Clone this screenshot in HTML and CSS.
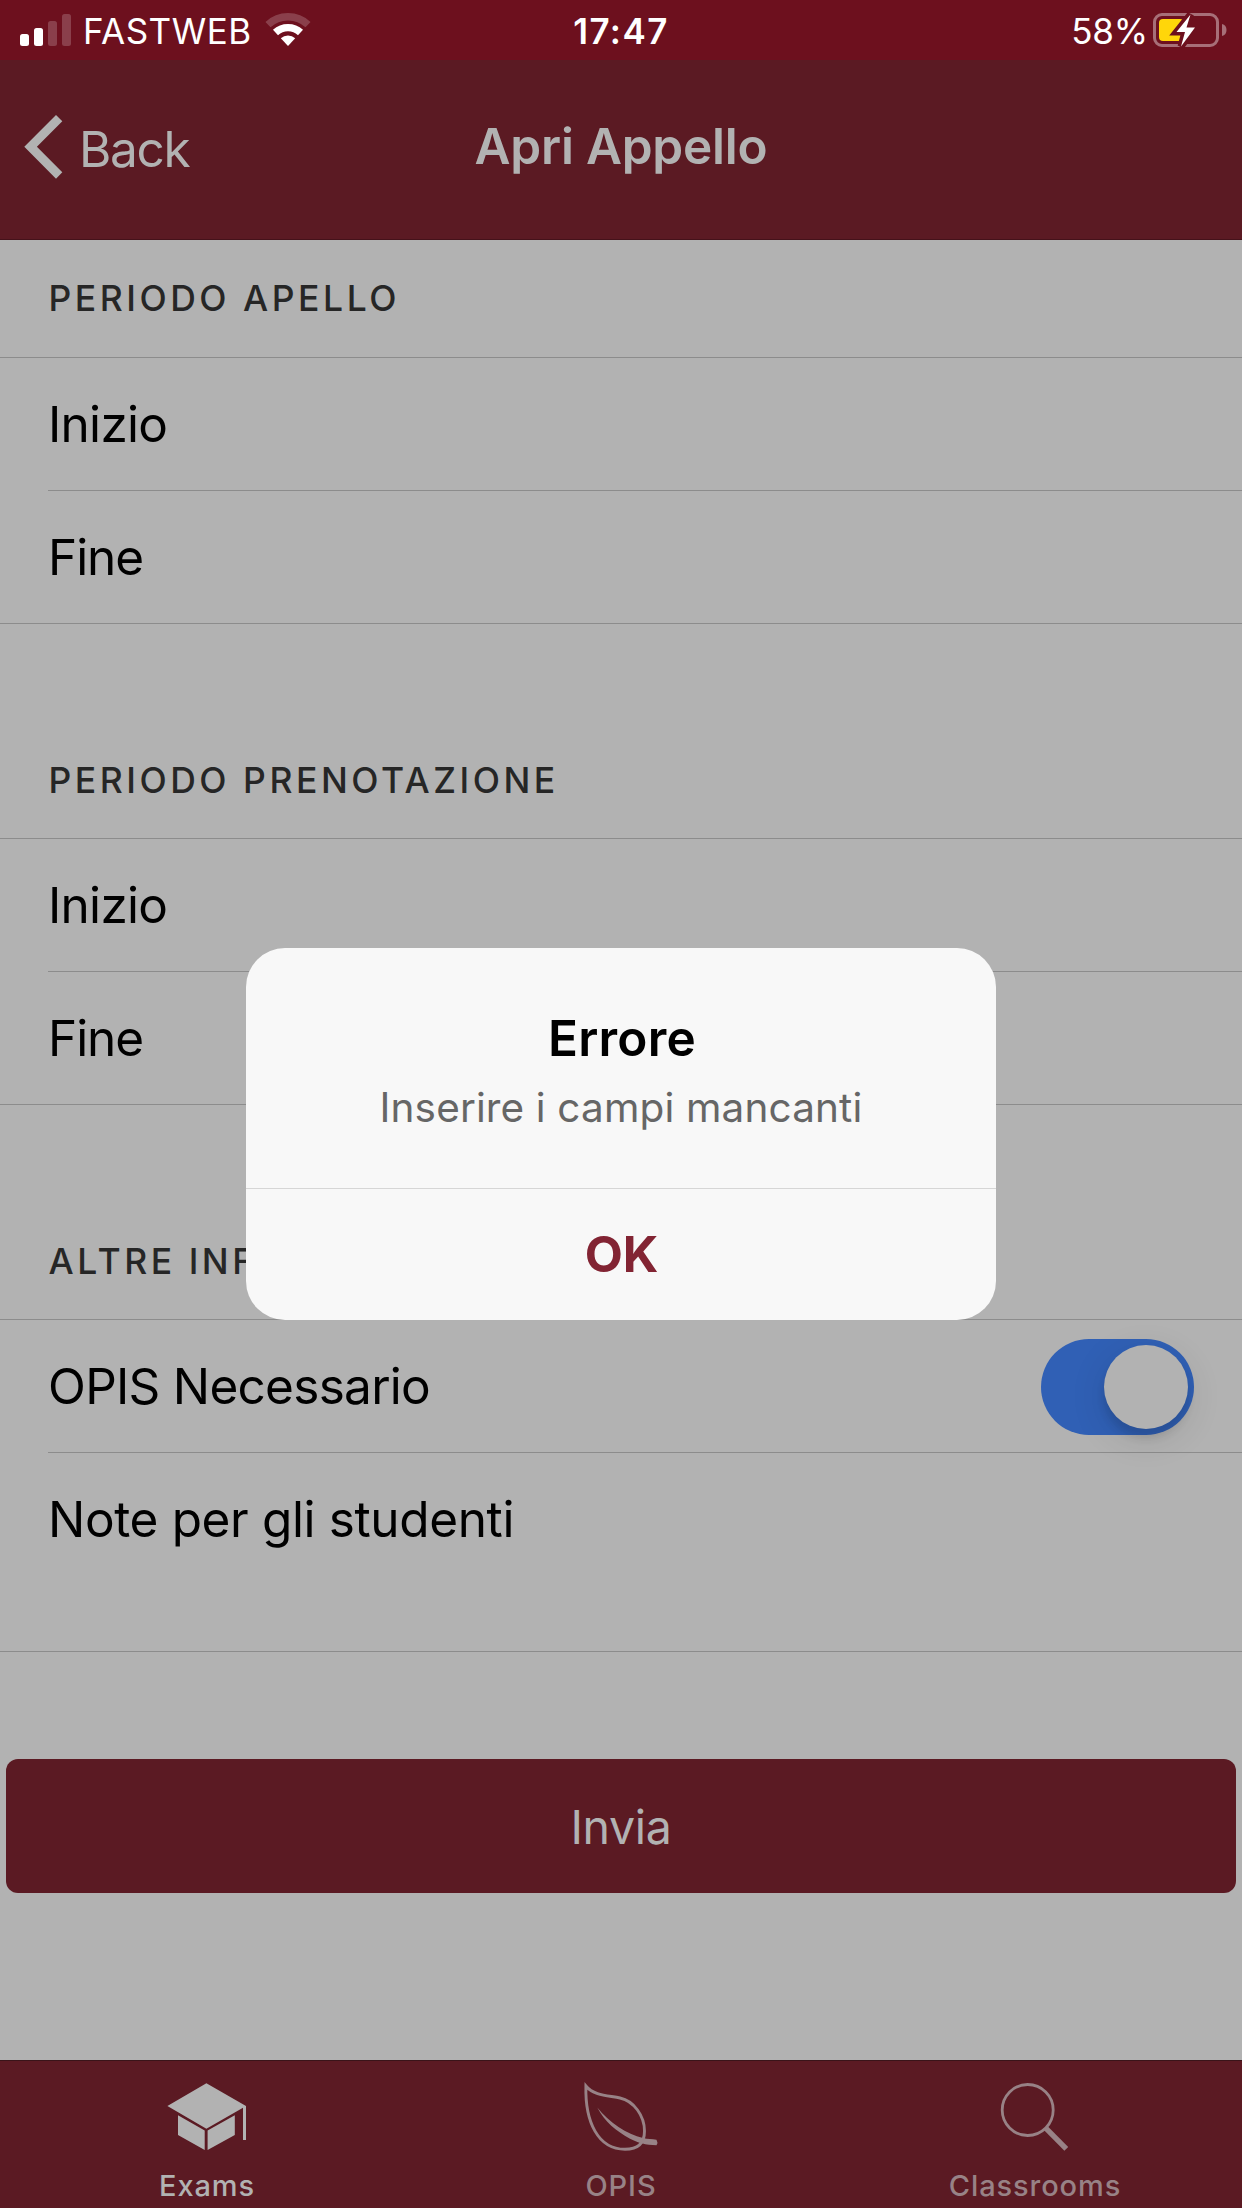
FILE: index.html
```html
<!DOCTYPE html>
<html lang="it">
<head>
<meta charset="utf-8">
<title>Apri Appello</title>
<link rel="stylesheet" href="styles.css">
</head>
<body>
<div class="screen">
  <div class="status-bar">
    <div class="status-left">
      <svg class="signal" viewBox="20 12 52 36" fill="#fff">
        <rect x="20" y="34" width="9" height="12" rx="2.5"/>
        <rect x="34" y="28" width="9" height="18" rx="2.5"/>
        <rect x="48" y="21" width="9" height="25" rx="2.5" opacity=".2"/>
        <rect x="62" y="14" width="9" height="32" rx="2.5" opacity=".2"/>
      </svg>
      <span class="carrier">FASTWEB</span>
      <svg class="wifi" viewBox="264 12 48 36" fill="none" stroke="#fff" stroke-width="7.4">
        <path d="M268 24.6A29.3 29.3 0 0 1 308 24.6" opacity=".2"/>
        <path d="M275.5 32.5A18.4 18.4 0 0 1 300.5 32.5"/>
        <path d="M288 46L280.8 38.3A10.5 10.5 0 0 1 295.2 38.3Z" fill="#fff" stroke="none"/>
      </svg>
    </div>
    <span class="clock">17:47</span>
    <div class="status-right">
      <span class="percent">58%</span>
      <svg class="battery" viewBox="152 10 76 42">
        <rect x="154.5" y="14.5" width="63" height="31" rx="7.5" fill="none" stroke="#fff" stroke-opacity=".4" stroke-width="3"/>
        <path d="M222 24A6 6.2 0 0 1 222 36Z" fill="#fff" fill-opacity=".4"/>
        <rect x="159" y="19" width="25" height="22" rx="4" fill="#ffd60a"/>
        <path d="M190.5 14.5L176.5 32H185L181 46.5L195 27.5H186.5Z" fill="#6d101e" stroke="#6d101e" stroke-width="7"/>
        <path d="M190.5 14.5L176.5 32H185L181 46.5L195 27.5H186.5Z" fill="#fff"/>
      </svg>
    </div>
  </div>

  <header class="nav-bar">
    <div class="back">
      <svg class="chevron" viewBox="24 114 39 66"><path d="M24.3 146.7L56 115L62.3 121.3L36.9 146.7L62.3 172.3L56 178.7Z" fill="#b2b2b2"/></svg>
      <span class="back-label">Back</span>
    </div>
    <h1 class="title">Apri Appello</h1>
  </header>

  <main class="content">
    <section class="group">
      <h2 class="group-title">PERIODO APELLO</h2>
      <div class="row"><div class="row-inner"><span class="inizio">Inizio</span></div></div>
      <div class="row last"><div class="row-inner"><span class="fine">Fine</span></div></div>
    </section>
    <section class="group">
      <h2 class="group-title">PERIODO PRENOTAZIONE</h2>
      <div class="row"><div class="row-inner"><span class="inizio">Inizio</span></div></div>
      <div class="row last"><div class="row-inner"><span class="fine">Fine</span></div></div>
    </section>
    <section class="group">
      <h2 class="group-title">ALTRE INFORMAZIONI</h2>
      <div class="row"><div class="row-inner"><span class="opis">OPIS Necessario</span><div class="toggle"><div class="knob"></div></div></div></div>
      <div class="row last note"><div class="row-inner"><span class="note-label">Note per gli studenti</span></div></div>
    </section>
    <div class="submit">Invia</div>
  </main>

  <nav class="tab-bar">
    <div class="tab active">
      <svg class="tab-icon" viewBox="167 2080 80 74" fill="currentColor">
        <path d="M206.4 2083.2L246 2106V2140H243V2107.7L206.4 2128.8L167.4 2106Z"/>
        <path d="M178 2115.3L204.7 2130.6V2150L178 2135ZM234.8 2115.3L207.6 2130.6V2150L234.8 2135Z"/>
      </svg>
      <span>Exams</span>
    </div>
    <div class="tab">
      <svg class="tab-icon" viewBox="581 2080 80 74" fill="currentColor">
        <path d="M585.9 2086C594 2096 609 2095.5 620 2098C634 2101 644.5 2116 644.5 2131C644.5 2143 638 2149.3 625 2149.3C598 2149.3 585 2122 585.9 2086Z" fill="none" stroke="currentColor" stroke-width="2.9"/>
        <path d="M597.3 2107.5C609 2122.5 627 2134.5 643 2138C648 2139.4 652 2139 656.5 2139.7Q658.3 2142.5 656.5 2145.2C646 2145.2 637 2142.3 630 2138.7C616 2131 605 2122 597.3 2107.5Z"/>
      </svg>
      <span>OPIS</span>
    </div>
    <div class="tab">
      <svg class="tab-icon" viewBox="995 2080 80 74" fill="none" stroke="currentColor">
        <circle cx="1027.7" cy="2110" r="25.5" stroke-width="2.8"/>
        <path d="M1045.5 2127.8L1066.3 2148.8" stroke-width="5.4"/>
      </svg>
      <span>Classrooms</span>
    </div>
  </nav>

  <div class="alert">
    <div class="alert-head">
      <div class="alert-title">Errore</div>
      <div class="alert-message">Inserire i campi mancanti</div>
    </div>
    <div class="alert-button">OK</div>
  </div>
</div>
</body>
</html>
```
FILE: styles.css
```css
* { box-sizing: border-box; }
body { margin: 0; font-family: Inter, "Liberation Sans", sans-serif; }
h1, h2 { margin: 0; }
svg { display: block; flex: none; }

.screen {
  position: relative;
  width: 1242px;
  height: 2208px;
  display: flex;
  flex-direction: column;
  overflow: hidden;
  background: #b2b2b2;
  color: #000;
  white-space: nowrap;
}

.status-bar {
  height: 60px;
  flex: none;
  display: grid;
  grid-template-columns: 1fr auto 1fr;
  align-items: center;
  padding: 2px 14px 0 20px;
  background: #6d101e;
  color: #fff;
  font-size: 35px;
  line-height: 58px;
}
.status-left, .status-right { display: flex; align-items: center; }
.status-right { justify-content: flex-end; }
.signal { width: 52px; height: 36px; margin-top: -2px; }
.carrier { width: 170px; margin-left: 11px; letter-spacing: 0.5px; }
.wifi { width: 48px; height: 36px; margin: -2px 0 0 11px; }
.clock { font-weight: 600; letter-spacing: 1.44px; padding-right: 6px; }
.percent { margin-right: 4px; letter-spacing: -0.2px; }
.battery { width: 76px; height: 42px; }

.nav-bar {
  height: 180px;
  flex: none;
  display: grid;
  grid-template-columns: 1fr auto 1fr;
  align-items: center;
  padding: 0 24px 8px;
  border-bottom: 1px solid #45121a;
  background: #5b1a23;
  color: #b2b2b2;
  font-size: 49.5px;
}
.back { display: flex; align-items: center; gap: 16px; padding-top: 6px; }
.chevron { width: 39px; height: 66px; margin-top: -3px; }
.back-label { letter-spacing: -1.35px; }
.title { font-size: 49.5px; font-weight: 600; letter-spacing: -0.22px; }

.content { flex: 1; }
.group { margin-bottom: 97px; }
.group-title {
  height: 118px;
  padding-left: 48.5px;
  border-bottom: 1px solid #8c8c8c;
  color: #262626;
  font-size: 35.5px;
  font-weight: 500;
  letter-spacing: 3.53px;
  line-height: 117px;
}
.group + .group .group-title { line-height: 119px; }
.row { height: 133px; padding-left: 48px; font-size: 49.5px; line-height: 132px; }
.row-inner {
  height: 133px;
  display: flex;
  justify-content: space-between;
  align-items: center;
  padding-right: 48px;
  border-bottom: 1px solid #8c8c8c;
}
.last { border-bottom: 1px solid #8c8c8c; }
.last .row-inner { height: 132px; border-bottom: 0; }
.note { height: 199px; }
.inizio { letter-spacing: -0.71px; }
.fine { letter-spacing: -1.05px; }
.opis { letter-spacing: -0.72px; }
.note-label { letter-spacing: -0.36px; }

.toggle {
  width: 153px;
  height: 96px;
  display: flex;
  justify-content: flex-end;
  padding: 6px;
  margin-top: 2px;
  border-radius: 48px;
  background: #3060b5;
}
.knob {
  width: 84px;
  height: 84px;
  border-radius: 50%;
  background: #b2b2b2;
  box-shadow: 0 9px 36px rgba(0, 0, 0, 0.12), 0 9px 9px rgba(0, 0, 0, 0.1);
}

.submit {
  height: 134px;
  margin: 107px 6px 0;
  border-radius: 12px;
  background: #5b1a23;
  color: #b2b2b2;
  font-size: 46.5px;
  letter-spacing: -0.34px;
  line-height: 136px;
  text-align: center;
}

.tab-bar {
  height: 148px;
  flex: none;
  display: grid;
  grid-template-columns: repeat(3, 1fr);
  border-top: 1px solid #3a1419;
  background: #5b1a23;
}
.tab {
  display: flex;
  flex-direction: column;
  align-items: center;
  padding-top: 19px;
  color: #988286;
  font-size: 29px;
  font-weight: 500;
  letter-spacing: 0.9px;
  line-height: 40px;
}
.active { color: #b2b2b2; }
.tab-icon { width: 80px; height: 74px; margin-bottom: 12px; }

.alert {
  position: absolute;
  left: 246px;
  top: 948px;
  width: 750px;
  height: 372px;
  border-radius: 39px;
  background: #f8f8f8;
  text-align: center;
}
.alert-head { height: 241px; padding-top: 60px; border-bottom: 1px solid #d6d6d6; }
.alert-title { padding-left: 2px; font-size: 49.5px; font-weight: 600; letter-spacing: 0.19px; line-height: 60px; }
.alert-message { margin-top: 15px; color: #666; font-size: 40.5px; letter-spacing: 0.14px; line-height: 50px; }
.alert-button { padding-left: 1px; color: #822433; font-size: 49.5px; font-weight: 700; line-height: 131px; }
```
